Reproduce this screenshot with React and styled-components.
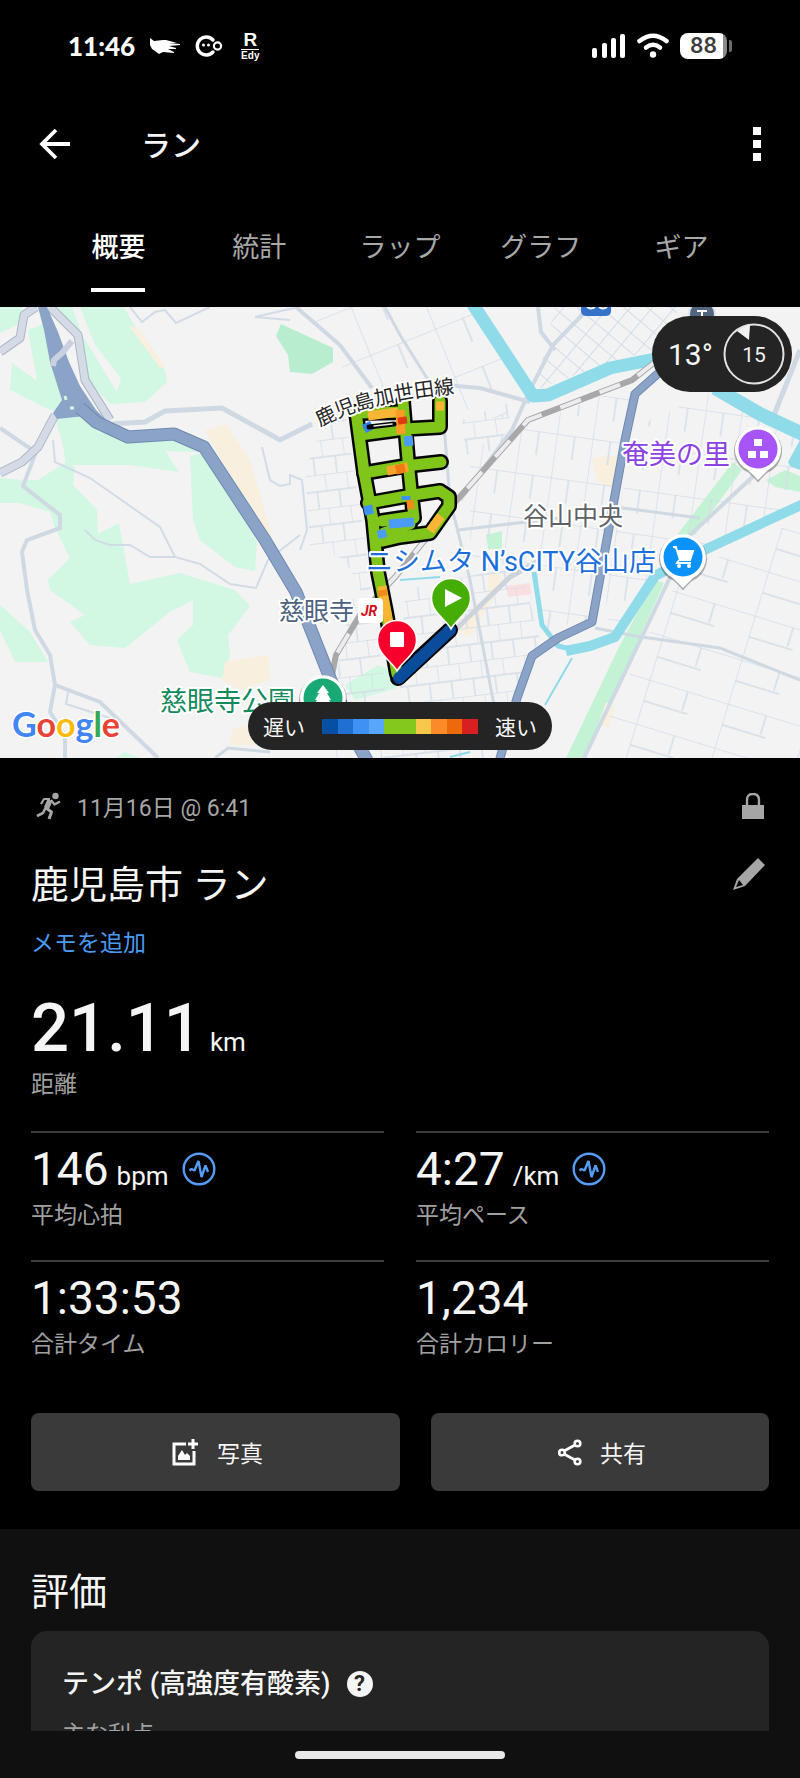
import { useState } from "react";
import styled, { createGlobalStyle } from "styled-components";

const tabs = ["概要", "統計", "ラップ", "グラフ", "ギア"];

const stats = [
  { value: "146", unit: "bpm", label: "平均心拍", pulse: true },
  { value: "4:27", unit: "/km", label: "平均ペース", pulse: true },
  { value: "1:33:53", label: "合計タイム" },
  { value: "1,234", label: "合計カロリー" },
];

const paceColors = [
  "#0650a4",
  "#1f70d2",
  "#3d92f4",
  "#58a6fc",
  "#84c81e",
  "#84c81e",
  "#f8c84c",
  "#fb8a28",
  "#ec690c",
  "#d82022",
];

const StatusIcons = () => (
  <StatusGroup>
    <svg width="32" height="18" viewBox="0 0 32 18" fill="#fff">
      <path d="M1 1 L5 4 L14 3 L17 3 L28 6 L20 6 L31 7 L31 8 L20 9 L27 11 L27 12 L19 12 L25 15 L25 16 L14 15 L10 17 L6 14 L3 12 L1 8 Z" />
    </svg>
    <svg width="28" height="24" viewBox="0 0 28 24" fill="none">
      <path
        d="M18 6 A9 9 0 1 0 18 18"
        stroke="#fff"
        strokeWidth="3.400"
        strokeLinecap="round"
      />
      <circle cx="22.500" cy="12" r="3.600" stroke="#fff" strokeWidth="2.200" />
      <circle cx="8.500" cy="11" r="1.500" fill="#fff" />
      <circle cx="13.500" cy="11" r="1.500" fill="#fff" />
    </svg>
    <Edy>
      <b>R</b>
      <span>Edy</span>
    </Edy>
  </StatusGroup>
);

const SignalIcons = () => (
  <SignalGroup>
    <svg width="34" height="26" viewBox="0 0 34 26" fill="#fff">
      <rect x="0" y="15" width="5" height="10" rx="2" />
      <rect x="10" y="10" width="5" height="15" rx="2" />
      <rect x="19" y="5" width="5" height="20" rx="2" />
      <rect x="28" y="1" width="5" height="24" rx="2" />
    </svg>
    <svg width="32" height="26" viewBox="0 0 32 26" fill="none">
      <g stroke="#fff" strokeWidth="4.500" strokeLinecap="round">
        <path d="M2.500 8 Q16 -2.500 29.500 8" />
        <path d="M9 14.500 Q16 9 23 14.500" />
      </g>
      <circle cx="16" cy="21.500" r="3.200" fill="#fff" />
    </svg>
    <Battery>
      <BatteryBody>88</BatteryBody>
      <BatteryTip />
    </Battery>
  </SignalGroup>
);

const RunnerIcon = () => (
  <svg width="26" height="28" viewBox="0 0 26 28" fill="none" stroke="#a6a6a6" strokeLinejoin="round">
    <circle cx="19.500" cy="4" r="3.200" fill="#a6a6a6" stroke="none" />
    <path d="M14 8 L10.500 16" strokeWidth="5.500" />
    <path d="M14 7 L8 7 L5 12" strokeWidth="2.200" />
    <path d="M15 8 L18.500 12.500 L24 9.500" strokeWidth="2.200" />
    <path d="M10 16 L15.500 20 L13 27" strokeWidth="3" />
    <path d="M10 15 L7 21 L1 24" strokeWidth="2.600" />
  </svg>
);

const PulseIcon = () => (
  <PulseSvg width="34" height="34" viewBox="0 0 34 34" fill="none">
    <circle cx="17" cy="17" r="15.300" stroke="#549cf5" strokeWidth="2.400" />
    <path
      d="M7.500 18.500 L9.500 17 L12.500 18.500 L16.500 9 L19.500 25 L23.500 13.500 L26 20"
      stroke="#549cf5"
      strokeWidth="2.400"
      strokeLinejoin="bevel"
    />
  </PulseSvg>
);

const Pin = ({ x, y, color, children }) => (
  <g transform={`translate(${x} ${y})`}>
    <path
      d="M0 32 Q-3 28 -9 22.500 A24 24 0 1 1 9 22.500 Q3 28 0 32 Z"
      fill="#000"
      opacity="0.3"
      transform="translate(0 1.500)"
    />
    <path d="M0 31 Q-3 28 -10 21 A23 23 0 1 1 10 21 Q3 28 0 31 Z" fill="#fff" />
    <circle r="19.500" fill={color} />
    {children}
  </g>
);

const RoutePin = ({ x, y, color, children }) => (
  <g transform={`translate(${x} ${y})`}>
    <path
      d="M0 31 C-5 21 -19.500 15 -19.500 0 A19.500 19.500 0 0 1 19.500 0 C19.500 15 5 21 0 31 Z"
      fill={color}
      stroke="#fff"
      strokeWidth="1.500"
    />
    {children}
  </g>
);

const routeLines = [
  "M356 412 L364 472 L373 520 L378 572 L386 612 L397 674",
  "M403 402 L408 460 L412 500 L414 518",
  "M358 413 L403 412",
  "M360 435 L405 429 L440 427 L440 401",
  "M364 473 L405 466 L441 462",
  "M368 503 L407 496 L440 491 L449 497 L449 506 L430 533 L400 537 L383 541",
  "M382 521 L409 517 L410 524 L384 533",
];

const routePatches = [
  ["M368 416 L398 412", "#f9b634"],
  ["M400 410 L401 434", "#fb9a26"],
  ["M402 417 L403 424", "#e03a12"],
  ["M366 423 L370 431", "#3186ee"],
  ["M408 436 L409 446", "#4a9cf8"],
  ["M387 471 L408 467", "#f9a52c"],
  ["M396 470 L405 468", "#f07a14"],
  ["M436 406 L444 406", "#f9b634"],
  ["M364 511 L373 509", "#3d92f4"],
  ["M406 500 L406 496", "#3d92f4"],
  ["M407 505 L414 504", "#f58a1c"],
  ["M389 524 L414 522", "#4a9cf8"],
  ["M381 530 L383 538", "#4a9cf8"],
  ["M441 516 L430 531", "#f9b634"],
  ["M382 586 L390 630", "#f9b634"],
  ["M382 590 L383 596", "#f58a1c"],
];

const MapView = () => (
  <MapSvg viewBox="0 307 800 451" preserveAspectRatio="xMidYMid slice">
    <defs>
      <pattern
        id="blocks"
        width="22"
        height="34"
        patternUnits="userSpaceOnUse"
        patternTransform="rotate(-7)"
      >
        <path d="M0 0 H22 M0 17 H22 M0 0 V17 M13 17 V34" stroke="#d3dde8" strokeWidth="1.400" fill="none" />
      </pattern>
      <pattern
        id="diagonal"
        width="15"
        height="17"
        patternUnits="userSpaceOnUse"
        patternTransform="rotate(-50)"
      >
        <path d="M0 0 H15 M0 0 V17" stroke="#d3dde8" strokeWidth="2" fill="none" />
      </pattern>
      <pattern
        id="wide"
        width="82"
        height="46"
        patternUnits="userSpaceOnUse"
        patternTransform="rotate(17)"
      >
        <path d="M0 0 H82 M0 0 V46 M40 0 V20 M0 22 H46" stroke="#d3dde8" strokeWidth="1.500" fill="none" />
      </pattern>
      <pattern
        id="north"
        width="70"
        height="52"
        patternUnits="userSpaceOnUse"
        patternTransform="rotate(-22)"
      >
        <path d="M0 0 H70 M0 0 V52 M30 0 V26" stroke="#d3dde8" strokeWidth="1.500" fill="none" />
      </pattern>
      <pattern
        id="medium"
        width="36"
        height="44"
        patternUnits="userSpaceOnUse"
        patternTransform="rotate(8)"
      >
        <path d="M0 0 H36 M0 0 V44 M18 0 V24" stroke="#d3dde8" strokeWidth="1.400" fill="none" />
      </pattern>
    </defs>

    <rect y="307" width="800" height="451" fill="#f3f3f4" />

    {/* parks and forest */}
    <g fill="#d2f7e2">
      <path d="M0 307 H22 L19 324 L0 333 Z" />
      <path d="M28 330 L48 322 L55 360 L62 400 L55 412 L40 405 L10 390 L12 363 L37 381 Z" />
      <path d="M52 307 H72 L82 335 L117 392 L121 378 L95 345 L80 307 H124 L140 335 L165 370 L167 382 L145 402 L110 404 L84 376 L78 340 Z" />
      <path d="M55 420 L80 416 L128 441 L172 438 L205 449 L196 452 L165 451 L179 472 L130 465 L66 465 L62 440 Z" />
      <path d="M190 456 L207 452 L228 492 L257 542 L255 571 L235 567 L200 540 L193 520 Z" />
      <path d="M0 478 L22 480 L38 480 L66 462 L75 467 L73 485 L97 510 L98 534 L119 523 L130 584 L180 573 L235 590 L250 606 L228 635 L230 655 L222 678 L190 672 L177 640 L193 625 L193 600 L170 612 L150 628 L125 648 L90 645 L70 622 L85 615 L50 590 L48 580 L70 558 L56 530 L50 512 L20 503 L0 503 Z" />
      <path d="M0 605 L30 632 L48 662 L15 662 L0 630 Z" />
      <path d="M115 758 L125 752 L140 758 Z" />
      <path d="M345 685 L378 665 L395 672 L397 688 L355 700 Z" />
    </g>
    <path d="M281 324 L305 335 L333 348 L333 362 L312 374 L290 372 L288 355 L276 336 Z" fill="#b9edcf" />
    <g fill="#c4f2d4">
      <path d="M486 535 L502 531 L502 549 L488 549 Z" />
      <path d="M733 462 L742 470 L695 535 L677 535 Z" />
      <path d="M655 580 L664 583 L586 758 L566 758 L620 645 Z" />
      <path d="M766 480 L785 470 L800 476 L800 492 L775 487 Z" />
    </g>
    <g fill="#f8efdf">
      <path d="M205 430 L226 424 L250 460 L272 535 L262 535 Z" />
      <path d="M128 325 L140 330 L165 367 L160 368 Z" />
      <path d="M225 662 L268 655 L270 680 L240 690 L222 680 Z" />
      <path d="M232 730 L262 720 L262 745 L230 745 Z" />
      <path d="M592 458 L622 455 L618 490 L598 482 Z" />
      <path d="M490 570 L505 580 L480 620 L470 637 L455 630 L486 600 Z" />
      <path d="M606 702 L615 708 L608 728 L598 724 Z" />
    </g>
    <path d="M506 586 L530 583 L532 594 L508 597 Z" fill="#fbdfe0" />

    {/* street blocks */}
    <path d="M320 430 L345 412 L368 560 L385 690 L390 758 L330 758 L340 650 L352 600 L360 590 L345 560 L310 545 L305 470 Z" fill="url(#blocks)" />
    <path d="M405 590 L520 565 L540 640 L515 700 L495 758 L380 758 L400 690 Z" fill="url(#blocks)" />
    <path d="M462 420 L515 400 L500 450 L465 455 Z" fill="url(#blocks)" />
    <path d="M535 390 L555 307 L680 307 L655 350 L610 362 Z" fill="url(#diagonal)" />
    <path d="M300 307 H470 L525 395 L500 420 L440 400 L350 390 L333 340 Z" fill="url(#north)" />
    <path d="M470 450 L530 424 L632 384 L622 470 L590 620 L545 630 L530 570 L470 560 Z" fill="url(#medium)" />
    <path d="M650 420 L710 392 L800 437 L800 500 L715 545 L655 580 L610 635 L605 590 L630 450 Z" fill="url(#medium)" />
    <path d="M690 570 L800 520 V758 H590 L665 600 Z" fill="url(#wide)" />

    {/* minor roads */}
    <g fill="none" stroke="#d2dce6" strokeWidth="2">
      <path d="M130 307 L142 322 L155 312 L165 310 L176 323 L210 307" />
      <path d="M255 317 L285 310 L300 307 M255 317 L290 320" />
      <path d="M53 440 L55 462 L90 478 L160 527 L175 557 L200 564 L230 584 L256 588 L268 560 L300 535" />
      <path d="M85 530 L95 540 L110 545 L130 545 L150 557 L176 557" />
      <path d="M262 447 L270 480 L280 486 L290 484 L290 475 L302 480 L307 530 L300 550" />
      <path d="M68 692 L66 704 L110 718" />
    </g>
    <g fill="none" stroke="#cfd9e3" strokeWidth="5">
      <path d="M110 424 L145 422 L165 411 L222 408 L280 440 L312 424" />
      <path d="M296 307 L340 345 L372 388" strokeWidth="4" />
      <path d="M0 428 L25 445 L36 452 L23 486 L60 515 L60 528 L27 540 L22 552 L27 590 L35 630 L50 655 L55 685 L50 712 L65 735 L65 758" strokeWidth="4" />
      <path d="M55 685 L100 702 L158 758" strokeWidth="4" />
      <path d="M215 758 L228 748 L270 752" strokeWidth="3" />
      <path d="M590 307 L553 345 L530 390 L512 430 L460 500" strokeWidth="4" />
      <path d="M538 307 L541 332 L555 350" strokeWidth="4" />
      <path d="M385 307 L400 335 L425 375 L442 400 L450 500 L470 580 L495 710" strokeWidth="3" />
      <path d="M445 385 L480 388 L530 402" strokeWidth="4" />
      <path d="M458 530 L560 518" strokeWidth="3" />
      <path d="M615 507 L700 518" strokeWidth="3" />
      <path d="M800 350 L770 425" />
      <path d="M760 470 L690 535 L650 620 L584 758" strokeWidth="4" />
      <path d="M595 628 L635 636 L720 648 L800 680" strokeWidth="3" />
    </g>
    <path d="M455 630 L510 577 L540 560" fill="none" stroke="#cdd3da" strokeWidth="5" />

    {/* rivers */}
    <g fill="none" stroke="#8fdbe9" strokeLinejoin="round">
      <path d="M472 303 L533 396 L548 395 L610 368 L660 358" strokeWidth="13" />
      <path d="M715 388 L760 414 L805 435" strokeWidth="14" />
      <path d="M803 504 L700 552 L655 576 L615 637 L590 646 L566 651" strokeWidth="10" />
      <path d="M575 650 L558 646 L542 625 L534 572" strokeWidth="5" />
      <path d="M572 658 L545 705 M440 577 L400 580 M470 752 L450 757" strokeWidth="2" />
    </g>
    <path d="M788 462 L800 440 V470 L790 466 Z" fill="#8fdbe9" />

    {/* railway */}
    <path
      d="M655 362 L632 380 L528 420 L457 500 L396 576 L360 615 L336 655 L331 680"
      fill="none"
      stroke="#a8a8aa"
      strokeWidth="6"
    />
    <path
      d="M655 362 L632 380 L528 420 L457 500 L396 576 L360 615 L336 655 L331 680"
      fill="none"
      stroke="#ececee"
      strokeWidth="4"
      strokeDasharray="22 20"
    />

    {/* ramps and expressway */}
    <g fill="none" strokeLinejoin="round">
      <g stroke="#adb6c4" strokeWidth="9">
        <path d="M50 307 L78 335 L85 380 L110 420" />
        <path d="M36 307 L24 315 L20 338 L0 352" />
        <path d="M55 415 L38 447 L22 462 L0 473" />
      </g>
      <g stroke="#d5dbe6" strokeWidth="7">
        <path d="M50 307 L78 335 L85 380 L110 420" />
        <path d="M36 307 L24 315 L20 338 L0 352" />
        <path d="M55 415 L38 447 L22 462 L0 473" />
      </g>
      <path d="M38 307 H47 L58 332 L69 362 L80 386 L96 410 L118 432 L85 416 L57 419 L53 413 L62 400 L50 362 L44 330 Z" fill="#8aa3c6" />
      <path d="M53 366 L54 360 L62 353 L72 341" stroke="#c9d1e0" strokeWidth="6" />
      <path d="M80 408 L96 422 L128 437 L174 434 L204 447 L265 540 L296 592 L330 678 L360 748 L368 762" stroke="#7089b2" strokeWidth="13" />
      <path d="M80 408 L96 422 L128 437 L174 434 L204 447 L265 540 L296 592 L330 678 L360 748 L368 762" stroke="#8aa3c6" strokeWidth="11" />
      <path d="M65 396 L66 400 M70 408 L74 408" stroke="#d8f5e6" strokeWidth="3" />
      <path d="M662 370 L635 394 L625 440 L605 550 L592 622 L558 638 L532 656 L517 698 L499 762" stroke="#7089b2" strokeWidth="9" />
      <path d="M662 370 L635 394 L625 440 L605 550 L592 622 L558 638 L532 656 L517 698 L499 762" stroke="#8aa3c6" strokeWidth="7" />
    </g>

    {/* badges cut by the top edge */}
    <path d="M581 300 H611 V311 Q611 316 605 316 H587 Q581 316 581 311 Z" fill="#3572c8" />
    <path d="M587 307 Q591 310 595 307 M599 307 Q603 310 607 307" stroke="#fff" strokeWidth="2" fill="none" />
    <circle cx="702" cy="314" r="13" fill="#52667f" stroke="#dfe5ec" strokeWidth="2" />
    <path d="M697 311 H707 M702 311 V316 M698 317 H706" stroke="#fff" strokeWidth="2" />

    {/* recorded track */}
    <g fill="none" strokeLinecap="round" strokeLinejoin="round">
      <path d="M398 678 L450 630" stroke="#050505" strokeWidth="16" />
      {routeLines.map((d) => (
        <path key={d} d={d} stroke="#050505" strokeWidth="16" />
      ))}
      {routeLines.map((d) => (
        <path key={d} d={d} stroke="#80c51a" strokeWidth="11" />
      ))}
      <g strokeLinecap="butt">
        {routePatches.map(([d, color]) => (
          <path key={d} d={d} stroke={color} strokeWidth="9" />
        ))}
      </g>
      <path d="M369 427 L394 424" stroke="#050505" strokeWidth="5" />
      <path d="M374 426 L392 424" stroke="#e8ece0" strokeWidth="1.500" />
      <path d="M399 678 L450 630" stroke="#0a4c9c" strokeWidth="12" />
    </g>

    <defs>
      <path id="roadName" d="M320 427 Q368 400 460 393" />
    </defs>
    <Label fill="#262626" fontSize="20">
      <textPath href="#roadName">鹿児島加世田線</textPath>
    </Label>
    <Label x="279" y="620" fill="#4c6280" fontSize="25">慈眼寺</Label>
    <Label x="523" y="525" fill="#5d6166" fontSize="25">谷山中央</Label>
    <Label x="622" y="464" fill="#8d42e2" fontSize="27">奄美の里</Label>
    <Label x="366" y="571" fill="#1b6fdb" fontSize="27">ニシムタ N’sCITY谷山店</Label>
    <Label x="160" y="711" fill="#138a5c" fontSize="27">慈眼寺公園</Label>

    <rect x="358" y="598" width="25" height="25" rx="4" fill="#fff" />
    <JrText x="361" y="616">JR</JrText>

    <Pin x="758" y="449" color="#a855f7">
      <path d="M-4 -10 H4 V-3 H-4 Z M-10 2 H-2 V9 H-10 Z M2 2 H10 V9 H2 Z" fill="#fff" />
    </Pin>
    <Pin x="683" y="557" color="#0c92fb">
      <path d="M-10 -10 H-7 L-3 3 H7 L10 -6 H-5" fill="#fff" stroke="#fff" strokeWidth="2" />
      <path d="M-4 3 L-6 6 H8" fill="none" stroke="#fff" strokeWidth="2" />
      <circle cx="-4" cy="9" r="2" fill="#fff" />
      <circle cx="6" cy="9" r="2" fill="#fff" />
    </Pin>
    <Pin x="323" y="698" color="#18a974">
      <path d="M0 -13 L6 -5 H4 L8 2 H6 L11 10 H-11 L-6 2 H-8 L-4 -5 H-6 Z" fill="#fff" />
    </Pin>
    <RoutePin x="451" y="598" color="#45ad04">
      <path d="M-6 -9 L11 0 L-6 9 Z" fill="#fff" />
    </RoutePin>
    <RoutePin x="397" y="640" color="#f8002c">
      <rect x="-7" y="-8" width="14" height="15" rx="1" fill="#fff" />
    </RoutePin>

    <GoogleText x="12" y="737">
      <tspan fill="#4285f4">G</tspan>
      <tspan fill="#ea4335">o</tspan>
      <tspan fill="#fbbc05">o</tspan>
      <tspan fill="#4285f4">g</tspan>
      <tspan fill="#34a853">l</tspan>
      <tspan fill="#ea4335">e</tspan>
    </GoogleText>
  </MapSvg>
);

export default function App() {
  const [activeTab, setActiveTab] = useState("概要");

  return (
    <>
      <GlobalStyle />
      <Screen lang="ja">
        <StatusBar>
          <StatusLeft>
            <Clock>11:46</Clock>
            <StatusIcons />
          </StatusLeft>
          <SignalIcons />
        </StatusBar>

        <Header>
          <IconButton aria-label="戻る">
            <svg width="32" height="32" viewBox="0 0 32 32" fill="none" stroke="#fff" strokeWidth="3.800">
              <path d="M31 16 H3 M17 2 L3 16 L17 30" />
            </svg>
          </IconButton>
          <HeaderTitle>ラン</HeaderTitle>
          <IconButton aria-label="メニュー">
            <svg width="8" height="34" viewBox="0 0 8 34" fill="#fff">
              <path d="M0 0 H8 V8 H0 Z M0 13 H8 V21 H0 Z M0 26 H8 V34 H0 Z" />
            </svg>
          </IconButton>
        </Header>

        <TabBar>
          {tabs.map((tab) => (
            <Tab key={tab} $active={tab === activeTab} onClick={() => setActiveTab(tab)}>
              {tab}
            </Tab>
          ))}
        </TabBar>

        <Content>
          <MapArea>
            <MapView />
            <Weather>
              <span>13°</span>
              <svg width="62" height="62" viewBox="0 0 62 62">
                <circle cx="31" cy="31" r="29.500" fill="none" stroke="#e2e2e2" strokeWidth="2" />
                <path d="M14 8 L26 17 L27 2 Q20 3 14 8 Z" fill="#f2f2f2" />
                <DialText x="31" y="39">15</DialText>
              </svg>
            </Weather>
            <Legend>
              <span>遅い</span>
              <Swatches>
                {paceColors.map((color, i) => (
                  <Swatch key={i} $color={color} />
                ))}
              </Swatches>
              <span>速い</span>
            </Legend>
          </MapArea>

          <Summary>
            <MetaRow>
              <RunnerIcon />
              <DateText>11月16日 @ 6:41</DateText>
              <svg width="22" height="26" viewBox="0 0 22 26">
                <path d="M0 12 H22 V26 H0 Z" fill="#a6a6a6" />
                <path d="M5 13 V7 Q5 1 11 1 Q17 1 17 7 V13" fill="none" stroke="#a6a6a6" strokeWidth="2.400" />
              </svg>
            </MetaRow>
            <TitleRow>
              <Title>鹿児島市 ラン</Title>
              <IconButton aria-label="編集">
                <svg width="32" height="32" viewBox="0 0 32 32" fill="#a6a6a6">
                  <path d="M25 0 L32 7 L12 28 L0 32 L4 21 Z M6 22 L3 29 L10 27 Z" fillRule="evenodd" />
                </svg>
              </IconButton>
            </TitleRow>
            <MemoLink href="#memo">メモを追加</MemoLink>

            <Distance>
              21.11<Unit>km</Unit>
            </Distance>
            <StatLabel>距離</StatLabel>

            <StatGrid>
              {stats.map((stat) => (
                <Stat key={stat.label}>
                  <StatValue>
                    {stat.value}
                    {stat.unit && <Unit>{stat.unit}</Unit>}
                    {stat.pulse && <PulseIcon />}
                  </StatValue>
                  <StatLabel>{stat.label}</StatLabel>
                </Stat>
              ))}
            </StatGrid>

            <Actions>
              <ActionButton>
                <svg width="27" height="27" viewBox="0 0 27 27" fill="none">
                  <path d="M14 5 H2 V25 H22 V12" stroke="#fff" strokeWidth="3" />
                  <path d="M21 0 V10 M16 5 H26" stroke="#fff" strokeWidth="3" />
                  <path d="M6 21 V17 L10 11 L13 16 L15 14 L18 17 V21 Z" fill="#fff" />
                </svg>
                写真
              </ActionButton>
              <ActionButton>
                <svg width="24" height="27" viewBox="0 0 24 27" fill="none" stroke="#fff" strokeWidth="2.600">
                  <path d="M6 12 L17 6 M6 15 L17 21" />
                  <circle cx="4" cy="13.500" r="2.800" />
                  <circle cx="19.500" cy="4.500" r="2.800" />
                  <circle cx="19.500" cy="22.500" r="2.800" />
                </svg>
                共有
              </ActionButton>
            </Actions>
          </Summary>

          <Evaluation>
            <SectionTitle>評価</SectionTitle>
            <Card>
              <CardTitle>
                テンポ (高強度有酸素)
                <HelpButton aria-label="ヘルプ">?</HelpButton>
              </CardTitle>
              <CardText>主な利点</CardText>
            </Card>
          </Evaluation>
        </Content>

        <NavBar>
          <HomeHandle />
        </NavBar>
      </Screen>
    </>
  );
}

const GlobalStyle = createGlobalStyle`
  * {
    box-sizing: border-box;
  }
  body {
    margin: 0;
    background: #000;
    color: #f5f5f5;
    font-family: Roboto, "Noto Sans CJK JP", sans-serif;
  }
  button {
    font-family: inherit;
    color: inherit;
    background: none;
    border: none;
    padding: 0;
    cursor: pointer;
  }
`;

const Screen = styled.div`
  height: 100vh;
  display: flex;
  flex-direction: column;
  overflow: hidden;
`;

const StatusBar = styled.div`
  flex: none;
  height: 92px;
  padding: 0 68px;
  display: flex;
  align-items: center;
  justify-content: space-between;
`;

const StatusLeft = styled.div`
  display: flex;
  align-items: center;
  gap: 14px;
`;

const Clock = styled.span`
  font-family: Lato, sans-serif;
  font-size: 26px;
  font-weight: 900;
  line-height: 32px;
  color: #fff;
`;

const StatusGroup = styled.div`
  display: flex;
  align-items: center;
  gap: 14px;
`;

const Edy = styled.span`
  display: flex;
  flex-direction: column;
  align-items: center;
  margin-left: 4px;
  color: #fff;
  font-family: "Liberation Sans", sans-serif;

  b {
    padding: 0 2px;
    border-bottom: 1px solid #fff;
    font-size: 19px;
    line-height: 18px;
  }
  span {
    font-size: 10px;
    font-weight: 700;
    line-height: 12px;
  }
`;

const SignalGroup = styled.div`
  display: flex;
  align-items: center;
  gap: 11px;
`;

const Battery = styled.span`
  display: flex;
  align-items: center;
  gap: 2px;
`;

const BatteryBody = styled.span`
  width: 47px;
  height: 26px;
  border-radius: 8px;
  background: linear-gradient(to right, #fff 92%, #8a8a8a 92%);
  color: #3c3c3c;
  font-family: Inter, sans-serif;
  font-size: 21px;
  font-weight: 600;
  line-height: 26px;
  text-align: center;
`;

const BatteryTip = styled.span`
  width: 3px;
  height: 12px;
  border-radius: 0 2px 2px 0;
  background: #6a6a6a;
`;

const Header = styled.header`
  flex: none;
  height: 104px;
  padding: 0 39px;
  display: flex;
  align-items: center;
`;

const IconButton = styled.button`
  display: flex;
`;

const HeaderTitle = styled.h1`
  flex: 1;
  margin: 0 0 0 70px;
  padding-top: 4px;
  font-size: 30px;
  font-weight: 500;
  line-height: 40px;
`;

const TabBar = styled.nav`
  flex: none;
  padding: 32px 48px 15px;
  display: grid;
  grid-template-columns: repeat(5, 1fr);
  justify-items: center;
`;

const Tab = styled.button`
  padding-bottom: 20px;
  border-bottom: 4px solid ${(props) => (props.$active ? "#fff" : "transparent")};
  color: ${(props) => (props.$active ? "#fff" : "#a8a8a8")};
  font-size: 27px;
  font-weight: ${(props) => (props.$active ? 500 : 400)};
  line-height: 40px;
`;

const Content = styled.main`
  flex: 1;
  min-height: 0;
  overflow-y: auto;
  scrollbar-width: none;
`;

const MapArea = styled.section`
  position: relative;
  height: 451px;
`;

const MapSvg = styled.svg`
  display: block;
  width: 100%;
  height: 100%;
`;

const Label = styled.text`
  paint-order: stroke;
  stroke: #fff;
  stroke-width: 4px;
  stroke-linejoin: round;
`;

const JrText = styled.text`
  fill: #d40c18;
  font-size: 14px;
  font-weight: 700;
  font-style: italic;
`;

const GoogleText = styled.text`
  paint-order: stroke;
  stroke: #fff;
  stroke-width: 3px;
  font-family: Lato, sans-serif;
  font-size: 34px;
  font-weight: 700;
`;

const DialText = styled.text`
  fill: #f0f0f0;
  font-size: 21px;
  text-anchor: middle;
`;

const Weather = styled.div`
  position: absolute;
  top: 9px;
  right: 8px;
  width: 140px;
  height: 76px;
  padding: 0 7px 0 16px;
  border-radius: 38px;
  background: #242424;
  display: flex;
  align-items: center;
  justify-content: space-between;
  font-size: 30px;
`;

const Legend = styled.div`
  position: absolute;
  bottom: 8px;
  left: 50%;
  transform: translateX(-50%);
  height: 48px;
  padding: 0 15px;
  border-radius: 24px;
  background: #242424;
  display: flex;
  align-items: center;
  gap: 17px;
  font-size: 21px;
  white-space: nowrap;
`;

const Swatches = styled.div`
  display: grid;
  grid-template-columns: repeat(10, 1fr);
  width: 156px;
  height: 15px;
`;

const Swatch = styled.span`
  background: ${(props) => props.$color};
`;

const Summary = styled.section`
  padding: 28px 31px 38px;
`;

const MetaRow = styled.div`
  height: 40px;
  padding: 0 5px;
  display: flex;
  align-items: center;
  color: #a6a6a6;
`;

const DateText = styled.span`
  flex: 1;
  margin-left: 15px;
  font-size: 23px;
`;

const TitleRow = styled.div`
  margin-top: 32px;
  padding-right: 4px;
  display: flex;
  align-items: flex-start;
  justify-content: space-between;
`;

const Title = styled.h2`
  margin: 0;
  padding-top: 2px;
  font-size: 38px;
  font-weight: 400;
  line-height: 50px;
`;

const MemoLink = styled.a`
  display: block;
  width: max-content;
  margin-top: 19px;
  color: #4a9af2;
  font-size: 23px;
  line-height: 30px;
  text-decoration: none;
`;

const Distance = styled.div`
  margin-top: 35px;
  display: flex;
  align-items: baseline;
  gap: 8px;
  font-size: 67px;
  font-weight: 500;
  line-height: 68px;
`;

const Unit = styled.span`
  font-size: 26px;
  font-weight: 400;
  line-height: 30px;
`;

const StatLabel = styled.div`
  margin-top: 8px;
  color: #a0a0a0;
  font-size: 23px;
  line-height: 30px;
`;

const StatGrid = styled.div`
  margin-top: 31px;
  display: grid;
  grid-template-columns: 1fr 1fr;
  column-gap: 32px;
`;

const Stat = styled.div`
  padding: 12px 0 29px;
  border-top: 2px solid #3c3c3c;
`;

const StatValue = styled.div`
  display: flex;
  align-items: baseline;
  gap: 8px;
  font-size: 46px;
  line-height: 48px;
`;

const PulseSvg = styled.svg`
  align-self: center;
  margin-left: 5px;
`;

const Actions = styled.div`
  margin-top: 24px;
  display: grid;
  grid-template-columns: 12fr 11fr;
  gap: 31px;
`;

const ActionButton = styled.button`
  height: 78px;
  padding-left: 4px;
  border-radius: 8px;
  background: #3a3a3a;
  display: flex;
  align-items: center;
  justify-content: center;
  gap: 18px;
  font-size: 23px;
`;

const Evaluation = styled.section`
  padding: 38px 31px 31px;
  background: #101010;
`;

const SectionTitle = styled.h2`
  margin: 0;
  font-size: 38px;
  font-weight: 400;
  line-height: 50px;
`;

const Card = styled.div`
  margin-top: 14px;
  padding: 35px 31px;
  border-radius: 16px;
  background: #242424;
`;

const CardTitle = styled.h3`
  margin: 0;
  display: flex;
  align-items: center;
  gap: 16px;
  font-size: 27px;
  font-weight: 500;
  line-height: 36px;
`;

const HelpButton = styled.button`
  width: 26px;
  height: 26px;
  border-radius: 50%;
  background: #f5f5f5;
  color: #242424;
  font-size: 22px;
  font-weight: 700;
  line-height: 26px;
`;

const CardText = styled.p`
  margin: 18px 0 0;
  color: #a2a2a2;
  font-size: 23px;
  line-height: 30px;
`;

const NavBar = styled.footer`
  flex: none;
  height: 47px;
  background: #101010;
  display: flex;
  align-items: center;
  justify-content: center;
`;

const HomeHandle = styled.div`
  width: 210px;
  height: 8px;
  border-radius: 4px;
  background: #e8e8e8;
`;
